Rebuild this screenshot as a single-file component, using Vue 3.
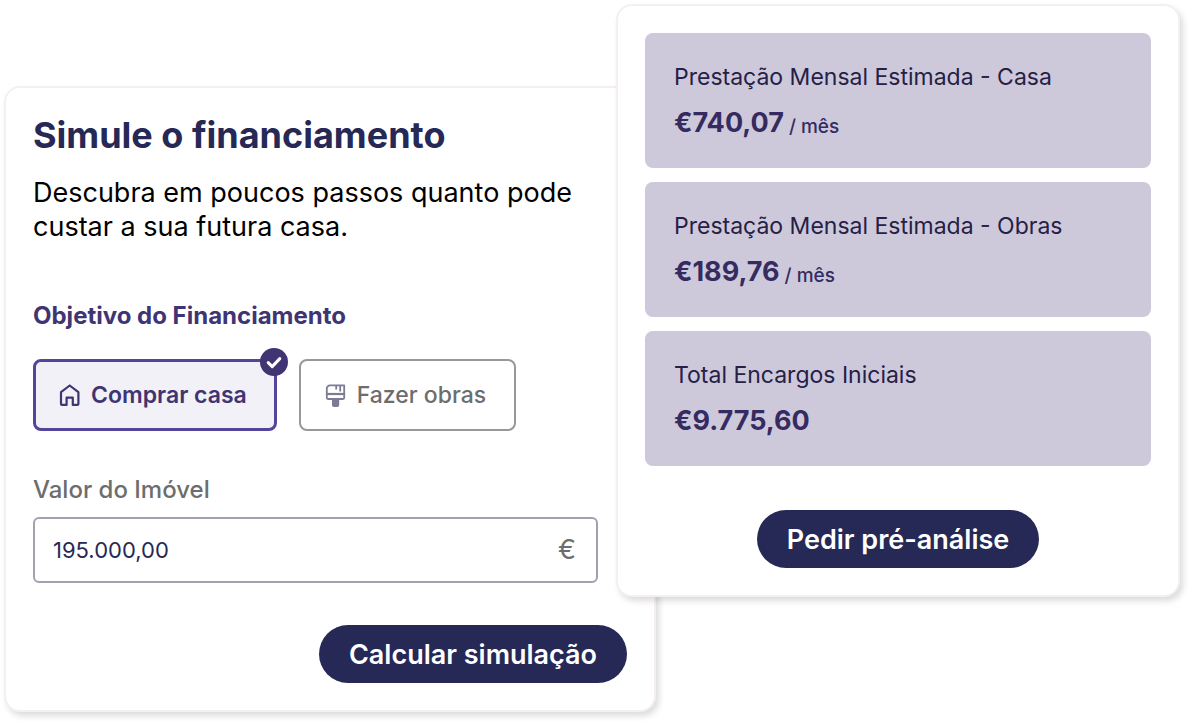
<script setup>
import { ref } from 'vue'

const goal = ref('casa')
const amount = ref('195.000,00')

const results = [
  { label: 'Prestação Mensal Estimada - Casa', value: '€740,07', unit: '/ mês' },
  { label: 'Prestação Mensal Estimada - Obras', value: '€189,76', unit: '/ mês' },
  { label: 'Total Encargos Iniciais', value: '€9.775,60', unit: '' },
]
</script>

<template>
  <main class="simulator">
    <form class="card form-card" @submit.prevent>
      <h1 class="title">Simule o financiamento</h1>
      <p class="intro">Descubra em poucos passos quanto pode<br />custar a sua futura casa.</p>

      <fieldset class="goal">
        <legend class="legend">Objetivo do Financiamento</legend>
        <div class="options">
          <label class="option" :class="{ selected: goal === 'casa' }">
            <input v-model="goal" class="radio" type="radio" name="goal" value="casa" />
            <svg class="icon" viewBox="0 0 22 24" fill="none" stroke="currentColor" stroke-width="2.2" stroke-linejoin="round" aria-hidden="true">
              <path d="M3 9.200 11.700 2.500l8.700 6.700v11.700a1 1 0 0 1-1 1h-4.600v-7.200h-6.200v7.200H4a1 1 0 0 1-1-1z" />
            </svg>
            <span>Comprar casa</span>
            <span v-if="goal === 'casa'" class="badge">
              <svg viewBox="0 0 28 28" fill="none" stroke="#fff" stroke-width="3" stroke-linecap="round" stroke-linejoin="round" aria-hidden="true">
                <path d="m8.200 14.600 4 4 7.600-8" />
              </svg>
            </span>
          </label>
          <label class="option" :class="{ selected: goal === 'obras' }">
            <input v-model="goal" class="radio" type="radio" name="goal" value="obras" />
            <svg class="icon brush" viewBox="0 0 22 24" fill="none" stroke="currentColor" stroke-width="1.800" stroke-linejoin="round" aria-hidden="true">
              <path d="M6 2.400h14.200v12.400a1.200 1.200 0 0 1-1.200 1.200H4a1.200 1.200 0 0 1-1.200-1.200V5.600A3.200 3.200 0 0 1 6 2.400zM12.200 2.400v4.200M16.200 2.400v6.200" />
              <path d="M2.800 11h17.400" stroke-width="2.200" />
              <path d="M8.900 16.500h5.400v5.500a1 1 0 0 1-1 1H9.900a1 1 0 0 1-1-1z" fill="currentColor" />
            </svg>
            <span>Fazer obras</span>
            <span v-if="goal === 'obras'" class="badge">
              <svg viewBox="0 0 28 28" fill="none" stroke="#fff" stroke-width="3" stroke-linecap="round" stroke-linejoin="round" aria-hidden="true">
                <path d="m8.200 14.600 4 4 7.600-8" />
              </svg>
            </span>
          </label>
        </div>
      </fieldset>

      <label class="amount-label" for="amount">Valor do Imóvel</label>
      <div class="amount">
        <input id="amount" v-model="amount" class="amount-input" type="text" inputmode="decimal" />
        <span class="currency">€</span>
      </div>

      <button class="pill calculate" type="submit">Calcular simulação</button>
    </form>

    <section class="card result-card">
      <div class="tiles">
        <div v-for="item in results" :key="item.label" class="tile">
          <p class="tile-label">{{ item.label }}</p>
          <p class="tile-value">
            <strong class="figure">{{ item.value }}</strong>
            <span v-if="item.unit" class="unit">{{ item.unit }}</span>
          </p>
        </div>
      </div>
      <button class="pill request" type="button">Pedir pré-análise</button>
    </section>
  </main>
</template>

<style>
body {
  background: #fff;
}
</style>

<style scoped>
/* The two cards share the narrow middle column, where the results lie over the form. */
.simulator {
  display: grid;
  grid-template-columns: minmax(0, 612fr) minmax(0, 40fr) minmax(0, 524fr);
  align-items: start;
  padding: 4px 11px 10px 4px;
  font-family: Inter, "Open Sans", sans-serif;
  color: #262855;
}

.card {
  display: flex;
  flex-direction: column;
  box-sizing: border-box;
  padding: 27px;
  background: #fff;
  border: 2px solid #f5eff1;
  border-radius: 16px;
  box-shadow: 3px 4px 6px rgba(0, 0, 0, 0.14);
}

.form-card {
  grid-area: 1 / 1 / 2 / 3;
  margin-top: 82px;
}

.result-card {
  grid-area: 1 / 2 / 2 / 4;
}

.title {
  margin: 0;
  font-size: 36px;
  line-height: 40px;
  font-weight: 700;
}

.intro {
  margin: 21px 0 0;
  font-size: 27px;
  line-height: 34px;
  color: #000;
}

.goal {
  min-width: 0;
  margin: 60px 0 0;
  padding: 0;
  border: 0;
}

.legend {
  padding: 0;
  font-size: 24px;
  line-height: 24px;
  font-weight: 700;
  color: #403472;
}

.options {
  display: flex;
  gap: 22px;
  margin-top: 31px;
}

.option {
  position: relative;
  display: flex;
  align-items: center;
  gap: 11px;
  box-sizing: border-box;
  height: 72px;
  padding: 0 28px 0 23px;
  border: 2px solid #9a9799;
  border-radius: 8px;
  font-size: 23px;
  line-height: 28px;
  font-weight: 500;
  color: #6d6d6d;
  cursor: pointer;
}

.option.selected {
  padding: 0 27px 0 22px;
  border: 3px solid #54459a;
  background: #f2f1f7;
  font-weight: 600;
  color: #403472;
}

.radio {
  position: absolute;
  opacity: 0;
  margin: 0;
}

.icon {
  width: 22px;
  height: 24px;
}

.brush {
  color: #7b7b95;
}

.badge {
  position: absolute;
  top: -14px;
  right: -14px;
  width: 28px;
  height: 28px;
  border-radius: 50%;
  background: #403472;
}

.badge svg {
  display: block;
}

.amount-label {
  margin-top: 47px;
  font-size: 24px;
  line-height: 24px;
  font-weight: 500;
  color: #6d6d6d;
}

.amount {
  display: flex;
  align-items: center;
  box-sizing: border-box;
  height: 66px;
  margin: 15px 29px 0 0;
  padding: 0 20px 0 18px;
  border: 2px solid #a3a1b0;
  border-radius: 6px;
}

.amount-input {
  flex: 1;
  min-width: 0;
  padding: 0;
  border: 0;
  outline: 0;
  background: none;
  font: inherit;
  font-size: 22px;
  line-height: 28px;
  color: #262855;
}

.currency {
  font-size: 27px;
  line-height: 28px;
  color: #6d6d6d;
}

.pill {
  height: 58px;
  padding: 0 30px;
  border: 0;
  border-radius: 29px;
  background: #262855;
  font: inherit;
  font-size: 27px;
  font-weight: 600;
  color: #fff;
  white-space: nowrap;
  cursor: pointer;
}

.calculate {
  align-self: flex-end;
  margin-top: 42px;
}

.request {
  align-self: center;
  margin-top: 44px;
}

.tiles {
  display: grid;
  gap: 14px;
}

.tile {
  padding: 29px;
  border-radius: 8px;
  background: #cdc9db;
}

.tile-label {
  margin: 0;
  font-size: 23px;
  line-height: 30px;
  color: #262046;
}

.tile-value {
  display: flex;
  align-items: flex-end;
  gap: 5px;
  margin: 15px 0 0;
  color: #352b60;
}

.figure {
  font-size: 27px;
  line-height: 32px;
  font-weight: 700;
}

.unit {
  font-size: 19px;
  line-height: 24px;
  font-weight: 500;
}
</style>
